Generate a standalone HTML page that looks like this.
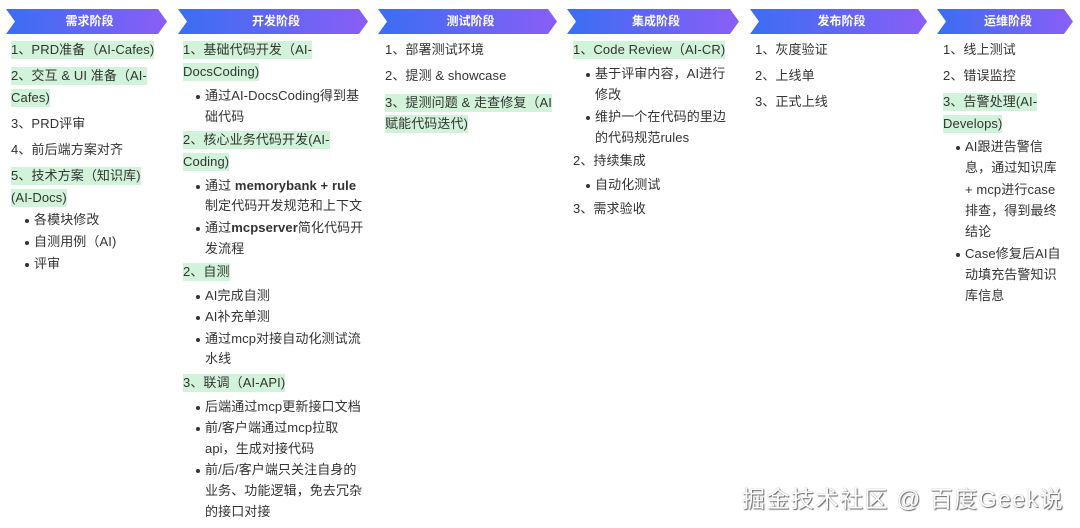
<!DOCTYPE html>
<html><head><meta charset="utf-8"><style>
*{margin:0;padding:0;box-sizing:border-box}
body{width:1080px;height:528px;background:#fff;position:relative;overflow:hidden;font-family:"Liberation Sans","Noto Sans CJK SC",sans-serif;font-size:13px;color:#333}
.h{position:absolute;top:9px;height:25px;background:linear-gradient(90deg,#3a6ef2,#8a5ef6);clip-path:polygon(0 0,calc(100% - 9px) 0,100% 50%,calc(100% - 9px) 100%,0 100%,9px 50%);color:#fff;font-weight:bold;font-size:12px;line-height:25px;text-align:center;padding-left:6px}
.l{position:absolute;white-space:nowrap;line-height:18px;height:18px;margin-top:1px;letter-spacing:0.1px}
.g{background:#d0f3d9}
.b::before{content:"";position:absolute;left:-9px;top:8px;width:4px;height:4px;border-radius:50%;background:#333}
.wm{position:absolute;left:742px;top:480px;font-size:23px;color:#fff;text-shadow:1px 1px 1px #666,0 0 1px #888;white-space:nowrap;letter-spacing:1.5px}
</style></head><body>
<div class="h" style="left:6px;width:161px">需求阶段</div>
<div class="h" style="left:178px;width:190px">开发阶段</div>
<div class="h" style="left:378px;width:179px">测试阶段</div>
<div class="h" style="left:567px;width:172px">集成阶段</div>
<div class="h" style="left:750px;width:177px">发布阶段</div>
<div class="h" style="left:937px;width:136px">运维阶段</div>

<div class="l g" style="left:11px;top:40px">1、PRD准备（AI-Cafes)</div>
<div class="l g" style="left:11px;top:66px">2、交互 &amp; UI 准备（AI-</div>
<div class="l g" style="left:11px;top:88px">Cafes)</div>
<div class="l" style="left:11px;top:114px">3、PRD评审</div>
<div class="l" style="left:11px;top:140px">4、前后端方案对齐</div>
<div class="l g" style="left:11px;top:166px">5、技术方案（知识库)</div>
<div class="l g" style="left:11px;top:188px">(AI-Docs)</div>
<div class="l b" style="left:34px;top:210px">各模块修改</div>
<div class="l b" style="left:34px;top:232px">自测用例（AI)</div>
<div class="l b" style="left:34px;top:254px">评审</div>

<div class="l g" style="left:183px;top:40px">1、基础代码开发（AI-</div>
<div class="l g" style="left:183px;top:62px">DocsCoding)</div>
<div class="l b" style="left:205px;top:86px">通过AI-DocsCoding得到基</div>
<div class="l" style="left:205px;top:107px">础代码</div>
<div class="l g" style="left:183px;top:130px">2、核心业务代码开发(AI-</div>
<div class="l g" style="left:183px;top:152px">Coding)</div>
<div class="l b" style="left:205px;top:176px">通过 <b>memorybank + rule</b></div>
<div class="l" style="left:205px;top:196px">制定代码开发规范和上下文</div>
<div class="l b" style="left:205px;top:218px">通过<b>mcpserver</b>简化代码开</div>
<div class="l" style="left:205px;top:239px">发流程</div>
<div class="l g" style="left:183px;top:262px">2、自测</div>
<div class="l b" style="left:205px;top:286px">AI完成自测</div>
<div class="l b" style="left:205px;top:307px">AI补充单测</div>
<div class="l b" style="left:205px;top:329px">通过mcp对接自动化测试流</div>
<div class="l" style="left:205px;top:349px">水线</div>
<div class="l g" style="left:183px;top:373px">3、联调（AI-API)</div>
<div class="l b" style="left:205px;top:397px">后端通过mcp更新接口文档</div>
<div class="l b" style="left:205px;top:418px">前/客户端通过mcp拉取</div>
<div class="l" style="left:205px;top:439px">api，生成对接代码</div>
<div class="l b" style="left:205px;top:460px">前/后/客户端只关注自身的</div>
<div class="l" style="left:205px;top:481px">业务、功能逻辑，免去冗杂</div>
<div class="l" style="left:205px;top:502px">的接口对接</div>

<div class="l" style="left:385px;top:40px">1、部署测试环境</div>
<div class="l" style="left:385px;top:66px">2、提测 &amp; showcase</div>
<div class="l g" style="left:385px;top:93px">3、提测问题 &amp; 走查修复（AI</div>
<div class="l g" style="left:385px;top:114px">赋能代码迭代)</div>

<div class="l g" style="left:573px;top:40px">1、Code Review（AI-CR)</div>
<div class="l b" style="left:595px;top:64px">基于评审内容，AI进行</div>
<div class="l" style="left:595px;top:85px">修改</div>
<div class="l b" style="left:595px;top:107px">维护一个在代码的里边</div>
<div class="l" style="left:595px;top:128px">的代码规范rules</div>
<div class="l" style="left:573px;top:151px">2、持续集成</div>
<div class="l b" style="left:595px;top:175px">自动化测试</div>
<div class="l" style="left:573px;top:199px">3、需求验收</div>

<div class="l" style="left:755px;top:40px">1、灰度验证</div>
<div class="l" style="left:755px;top:66px">2、上线单</div>
<div class="l" style="left:755px;top:92px">3、正式上线</div>

<div class="l" style="left:943px;top:40px">1、线上测试</div>
<div class="l" style="left:943px;top:66px">2、错误监控</div>
<div class="l g" style="left:943px;top:92px">3、告警处理(AI-</div>
<div class="l g" style="left:943px;top:114px">Develops)</div>
<div class="l b" style="left:965px;top:137px">AI跟进告警信</div>
<div class="l" style="left:965px;top:158px">息，通过知识库</div>
<div class="l" style="left:965px;top:180px">+ mcp进行case</div>
<div class="l" style="left:965px;top:201px">排查，得到最终</div>
<div class="l" style="left:965px;top:222px">结论</div>
<div class="l b" style="left:965px;top:244px">Case修复后AI自</div>
<div class="l" style="left:965px;top:265px">动填充告警知识</div>
<div class="l" style="left:965px;top:286px">库信息</div>

<div class="wm">掘金技术社区 @ 百度Geek说</div>
</body></html>
